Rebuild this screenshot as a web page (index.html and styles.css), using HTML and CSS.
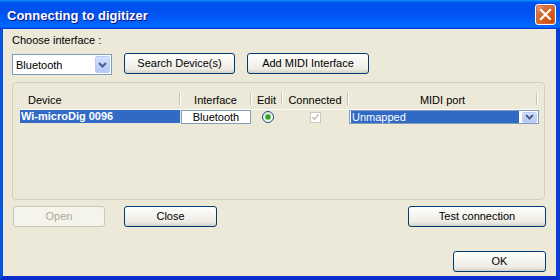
FILE: index.html
```html
<!DOCTYPE html>
<html>
<head>
<meta charset="utf-8">
<link rel="stylesheet" href="styles.css">
</head>
<body>
<div class="window">
  <div class="titlebar">
    <span class="title">Connecting to digitizer</span>
    <button class="close-btn" aria-label="Close">
      <svg width="13" height="13" viewBox="0 0 13 13"><path d="M2 2 L11 11 M11 2 L2 11" stroke="#fff" stroke-width="2.2" stroke-linecap="square"/></svg>
    </button>
  </div>
  <div class="frame">
    <div class="content">
      <div class="label">Choose interface :</div>
      <div class="toolbar">
        <div class="combo combo-iface">
          <span class="combo-text">Bluetooth</span>
          <span class="drop-btn"><svg width="9" height="6" viewBox="0 0 9 6"><path d="M1 1 L4.5 4.5 L8 1" fill="none" stroke="#4d6185" stroke-width="2"/></svg></span>
        </div>
        <button class="btn btn-search">Search Device(s)</button>
        <button class="btn btn-add">Add MIDI Interface</button>
      </div>
      <div class="groupbox">
        <div class="list">
          <div class="list-head">
            <div class="hcell hcell-left">Device</div>
            <div class="hcell">Interface</div>
            <div class="hcell">Edit</div>
            <div class="hcell">Connected</div>
            <div class="hcell">MIDI port</div>
          </div>
          <div class="list-row">
            <div class="cell cell-device">Wi-microDig 0096</div>
            <div class="cell cell-iface"><span class="iface-box">Bluetooth</span></div>
            <div class="cell cell-center"><span class="radio"><span class="radio-dot"></span></span></div>
            <div class="cell cell-center">
              <span class="check">
                <svg width="9" height="9" viewBox="0 0 9 9"><path d="M1.5 4 L3.5 6.5 L7.5 1.5" fill="none" stroke="#c6c4b6" stroke-width="1.6"/></svg>
              </span>
            </div>
            <div class="cell cell-midi">
              <div class="midi-combo">
                <span class="midi-text">Unmapped</span>
                <span class="drop-btn drop-small"><svg width="9" height="6" viewBox="0 0 9 6"><path d="M1 1 L4.5 4.5 L8 1" fill="none" stroke="#4d6185" stroke-width="2"/></svg></span>
              </div>
            </div>
          </div>
        </div>
      </div>
      <div class="actions">
        <button class="btn btn-open" disabled>Open</button>
        <button class="btn btn-close">Close</button>
        <button class="btn btn-test">Test connection</button>
      </div>
      <div class="footer">
        <button class="btn btn-ok">OK</button>
      </div>
    </div>
  </div>
</div>
</body>
</html>
```
FILE: styles.css
```css
html, body {
  margin: 0;
  padding: 0;
}
body {
  width: 560px;
  height: 280px;
  overflow: hidden;
  font-family: "Liberation Sans", Arial, sans-serif;
  font-size: 11px;
  color: #000;
}
.window {
  width: 560px;
  height: 280px;
  display: flex;
  flex-direction: column;
  background: #0a3fd8;
}
.titlebar {
  height: 29px;
  box-sizing: border-box;
  display: flex;
  align-items: center;
  padding: 0 4px 0 7px;
  background: linear-gradient(180deg, #0997ff 0%, #0053ee 9%, #0050ee 40%, #0066ff 88%, #0066ff 93%, #005bff 95%, #003dd7 96%, #003dd7 100%);
}
.title {
  flex: 1;
  color: #fff;
  font-weight: bold;
  font-size: 13px;
  padding-top: 2px;
  text-shadow: 1px 1px #0f1089;
  letter-spacing: 0px;
}
.close-btn {
  width: 21px;
  height: 21px;
  margin: 0;
  padding: 0;
  box-sizing: border-box;
  border: 1px solid #fff;
  border-radius: 3px;
  background: radial-gradient(circle at 90% 90%, #cc4600 0%, #dc6527 55%, #cd7546 70%, #e4916c 85%, #e99c7b 100%);
  display: flex;
  align-items: center;
  justify-content: center;
  box-shadow: inset 0 0 0 1px #d1663b;
}
.frame {
  flex: 1;
  display: flex;
  border-left: 3px solid #0553e6;
  border-right: 4px solid #0b3cd6;
  border-bottom: 4px solid #0a2ccb;
}
.content {
  flex: 1;
  background: #ece9d8;
  padding: 5px 10px 4px 9px;
  display: flex;
  flex-direction: column;
}
.label {
  height: 13px;
  line-height: 13px;
}
.toolbar {
  margin-top: 6px;
  height: 22px;
  display: flex;
  align-items: flex-start;
}
.combo {
  box-sizing: border-box;
  border: 1px solid #7f9db9;
  background: #fff;
  display: flex;
  align-items: center;
}
.combo-iface {
  width: 100px;
  height: 21px;
  margin-top: 1px;
  padding: 1px;
}
.combo-text {
  flex: 1;
  padding-left: 2px;
}
.drop-btn {
  width: 15px;
  height: 17px;
  box-sizing: border-box;
  border: 1px solid #b9cdf5;
  border-radius: 2px;
  background: linear-gradient(180deg, #d5e2fd 0%, #c1d3fb 50%, #b4c9f7 100%);
  display: flex;
  align-items: center;
  justify-content: center;
}
.btn {
  font-family: "Liberation Sans", Arial, sans-serif;
  font-size: 11px;
  color: #000;
  height: 21px;
  box-sizing: border-box;
  border: 1px solid #003c74;
  border-radius: 3px;
  background: linear-gradient(180deg, #ffffff 0%, #f6f5f0 40%, #ecebe4 80%, #d6d0c5 100%);
  padding: 0;
  margin: 0;
  line-height: 17px;
}
.btn-search {
  width: 111px;
  margin-left: 12px;
}
.btn-add {
  width: 122px;
  margin-left: 12px;
}
.groupbox {
  margin-top: 7px;
  margin-right: 1px;
  height: 118px;
  box-sizing: border-box;
  border: 1px solid #d0d0bf;
  border-radius: 4px;
  padding: 7px;
}
.list {
  width: 517px;
}
.list-head,
.list-row {
  display: grid;
  grid-template-columns: 160px 71px 31px 66px 189px;
}
.list-head {
  height: 20px;
  box-shadow: inset 0 -1px #fbfbf8;
}
.hcell {
  position: relative;
  text-align: center;
  line-height: 19px;
  height: 19px;
  padding-top: 1px;
}
.hcell::after {
  content: "";
  position: absolute;
  right: 0;
  top: 3px;
  height: 12px;
  width: 1px;
  background: #c7c5b2;
  box-shadow: 1px 0 #fff;
}
.hcell-left {
  text-align: left;
  padding-left: 8px;
}
.list-row {
  height: 14px;
}
.cell {
  height: 14px;
  display: flex;
  align-items: center;
}
.cell-device {
  height: 13px;
  background: #316ac5;
  color: #fff;
  font-weight: bold;
  padding-left: 1px;
  line-height: 13px;
}
.cell-iface {
  padding-left: 1px;
}
.iface-box {
  flex: 1;
  height: 14px;
  box-sizing: border-box;
  border: 1px solid #7f9db9;
  background: #fff;
  text-align: center;
  line-height: 12px;
}
.cell-center {
  justify-content: center;
}
.radio {
  width: 12px;
  height: 12px;
  box-sizing: border-box;
  border: 1px solid #1c5180;
  border-radius: 50%;
  background: linear-gradient(135deg, #dcdcd6 0%, #fff 80%);
  display: flex;
  align-items: center;
  justify-content: center;
  margin-left: 2px;
}
.radio-dot {
  width: 4px;
  height: 4px;
  border-radius: 50%;
  background: #21a121;
  box-shadow: 0 0 0 1px #5fc05f;
}
.check {
  width: 11px;
  height: 11px;
  box-sizing: border-box;
  border: 1px solid #cac8bb;
  background: #fff;
  display: flex;
  align-items: center;
  justify-content: center;
}
.cell-midi {
  padding-left: 1px;
}
.midi-combo {
  flex: 1;
  height: 14px;
  box-sizing: border-box;
  border: 1px solid #7f9db9;
  background: #fff;
  display: flex;
  align-items: center;
  padding: 0 1px 0 1px;
}
.midi-text {
  width: 167px;
  height: 12px;
  line-height: 12px;
  background: #316ac5;
  color: #fff;
  padding-left: 1px;
  margin-right: 3px;
}
.drop-small {
  height: 11px;
}
.actions {
  margin-top: 6px;
  display: flex;
}
.btn-open {
  width: 92px;
  margin-left: 1px;
  color: #aca899;
  border-color: #c9c7ba;
  background: #f5f4ea;
}
.btn-close {
  width: 93px;
  margin-left: 19px;
}
.btn-test {
  width: 138px;
  margin-left: auto;
}
.footer {
  margin-top: 24px;
  display: flex;
  justify-content: flex-end;
}
.btn-ok {
  width: 93px;
}
```
